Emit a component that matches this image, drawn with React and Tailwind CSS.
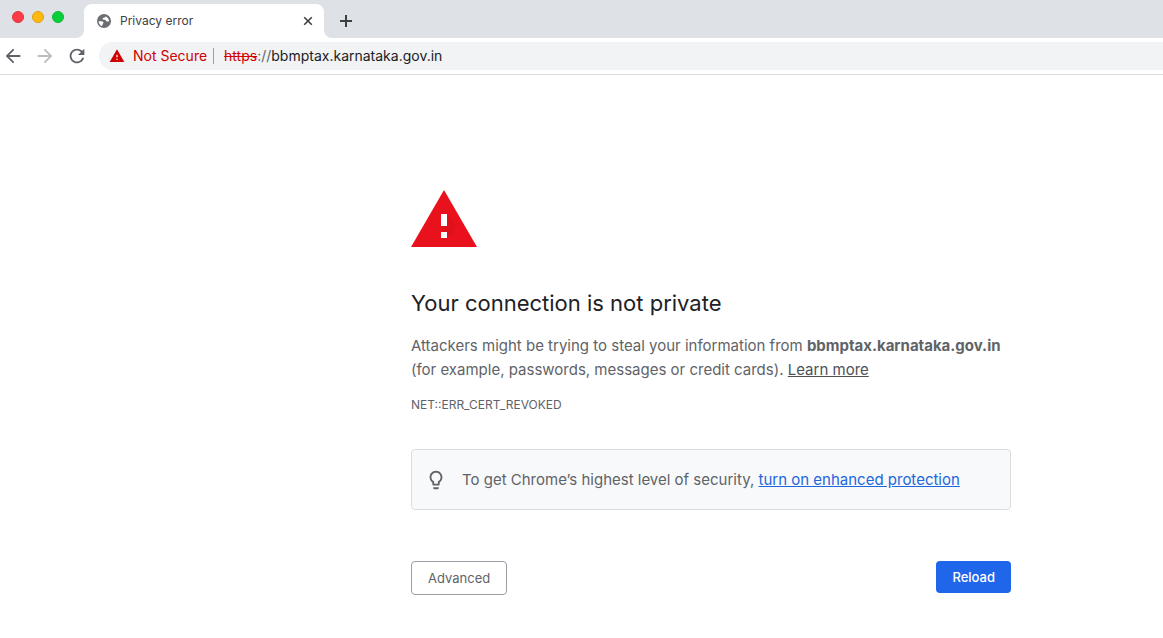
import React from 'react';
import {
  MdArrowBack,
  MdArrowForward,
  MdRefresh,
  MdWarning,
  MdLightbulbOutline,
} from 'react-icons/md';

const HOST = 'bbmptax.karnataka.gov.in';

const WindowControls = () => (
  <div className="flex w-[84px] shrink-0 gap-2 pt-[11px] pl-3">
    <button aria-label="Close window" className="h-3 w-3 rounded-full border border-[#e0333c] bg-[#fe3b46]" />
    <button aria-label="Minimise window" className="h-3 w-3 rounded-full border border-[#e0a10c] bg-[#fdb912]" />
    <button aria-label="Zoom window" className="h-3 w-3 rounded-full border border-[#0fb832] bg-[#06cf3c]" />
  </div>
);

// Curved foot where the active tab meets the toolbar
const TabFoot = ({ className }) => (
  <svg viewBox="0 0 8 8" className={className} fill="#ffffff" aria-hidden="true">
    <path d="M8 0v8H0a8 8 0 0 0 8-8z" />
  </svg>
);

// Default favicon: grey globe with the land left white
const GlobeIcon = ({ className }) => (
  <svg viewBox="0 0 16 16" className={className} aria-hidden="true">
    <circle cx="8" cy="8" r="7" fill="#6b6e72" />
    <path
      d="M9.6 3.4c-.5 1-1.500 1.200-2.400 1.500-.6.2-.9.9-.5 1.400.5.600 1.800.3 2.600.7.7.4.8 1.300 1.600 1.500.7.200 1.500-.1 2.200-.3-.1-2.200-1.500-4.200-3.500-4.800z"
      fill="#ffffff"
    />
    <path
      d="M2.600 8.400c1.500-.1 3.200-.1 4.300.4.900.4.8 1.300.1 1.700-.6.400-.2 1.400-.8 1.900-.2.200-.4.400-.4.600-1.700-.7-3-2.400-3.200-4.600z"
      fill="#ffffff"
    />
  </svg>
);

const TabStrip = () => (
  <div className="flex h-[38px] bg-[#dee1e6]">
    <WindowControls />
    <div className="relative mt-1 flex w-[240px] items-center rounded-t-lg bg-white pr-2 pl-3">
      <TabFoot className="absolute bottom-0 -left-2 h-2 w-2" />
      <TabFoot className="absolute -right-2 bottom-0 h-2 w-2 -scale-x-100" />
      <GlobeIcon className="h-4 w-4" />
      <span className="ml-2 flex-1 text-xs text-[#3c4043]">Privacy error</span>
      <button aria-label="Close tab" className="flex h-4 w-4 items-center justify-center text-[#3c4043]">
        <svg viewBox="0 0 16 16" className="h-4 w-4" stroke="currentColor" strokeWidth="1.6" aria-hidden="true">
          <path d="M4.2 4.2l7.6 7.6M11.8 4.2l-7.6 7.6" />
        </svg>
      </button>
    </div>
    <button aria-label="New tab" className="mt-1 ml-3 flex w-5 items-center justify-center text-[#3c4043]">
      <svg viewBox="0 0 20 20" className="h-5 w-5" stroke="currentColor" strokeWidth="2" aria-hidden="true">
        <path d="M10 4v12M4 10h12" />
      </svg>
    </button>
  </div>
);

const Toolbar = () => (
  <div className="flex items-center border-b border-[#dadce0] bg-white py-1 pl-[2px]">
    <div className="flex w-[97px] shrink-0 gap-[10px]">
      <button aria-label="Back" className="text-[#5f6368]">
        <MdArrowBack className="h-[22px] w-[22px]" />
      </button>
      <button aria-label="Forward" className="text-[#babcbe]">
        <MdArrowForward className="h-[22px] w-[22px]" />
      </button>
      <button aria-label="Reload page" className="text-[#5f6368]">
        <MdRefresh className="h-[22px] w-[22px]" />
      </button>
    </div>
    <div className="flex h-7 flex-1 items-center rounded-l-full bg-[#f1f3f4] pl-[10px] text-sm">
      <button className="flex items-center gap-2 text-[#d00000]">
        <MdWarning className="h-4 w-4" />
        Not Secure
      </button>
      <span className="mr-[10px] ml-[6px] h-4 w-px bg-[#9aa0a6]" />
      <span className="text-[#d00000] line-through">https</span>
      <span className="text-[#5f6368]">://</span>
      <input
        type="text"
        aria-label="Address"
        defaultValue={HOST}
        spellCheck={false}
        className="min-w-0 flex-1 bg-transparent text-[#202124] outline-none"
      />
    </div>
  </div>
);

const WarningTriangle = () => (
  <svg viewBox="0 0 66 57" className="h-[57px] w-[66px]" aria-hidden="true">
    <path d="M33 0l33 57H0z" fill="#e8111c" />
    <path d="M36 24l9 10-3 10-6 4h-6z" fill="#d5101c" opacity="0.4" />
    <path d="M30 24h6v12h-6zM30 42h6v6h-6z" fill="#ffffff" />
  </svg>
);

const App = () => {
  return (
    <div className="min-h-screen bg-white font-['Inter',sans-serif]">
      <TabStrip />
      <Toolbar />

      <main className="mr-[152px] ml-auto max-w-[600px] pt-[115px] text-[15px] leading-6 text-[#5f6368]">
        <WarningTriangle />

        <h1 className="mt-10 text-[22px] leading-8 text-[#202124]">Your connection is not private</h1>
        <p className="mt-[15px]">
          Attackers might be trying to steal your information from <strong>{HOST}</strong> (for example,
          passwords, messages or credit cards).{' '}
          <a href="#learn-more" className="text-[#4d5156] underline">
            Learn more
          </a>
        </p>
        <p className="mt-[15px] text-xs">NET::ERR_CERT_REVOKED</p>

        <div className="mt-9 flex items-center rounded border border-[#dadce0] bg-[#f8f9fb] px-[13px] pt-[18px] pb-[17px]">
          <MdLightbulbOutline className="h-[22px] w-[22px] shrink-0" />
          <p className="ml-[15px]">
            To get Chrome’s highest level of security,{' '}
            <a href="#enhanced-protection" className="text-[#1f66dc] underline">
              turn on enhanced protection
            </a>
          </p>
        </div>

        <div className="mt-[51px] flex items-start justify-between text-[13px]">
          <button className="rounded border border-[#9aa0a6] px-4 py-1">Advanced</button>
          <button className="rounded bg-[#1f66ea] px-4 py-1 font-medium text-white">Reload</button>
        </div>
      </main>
    </div>
  );
};

export default App;
